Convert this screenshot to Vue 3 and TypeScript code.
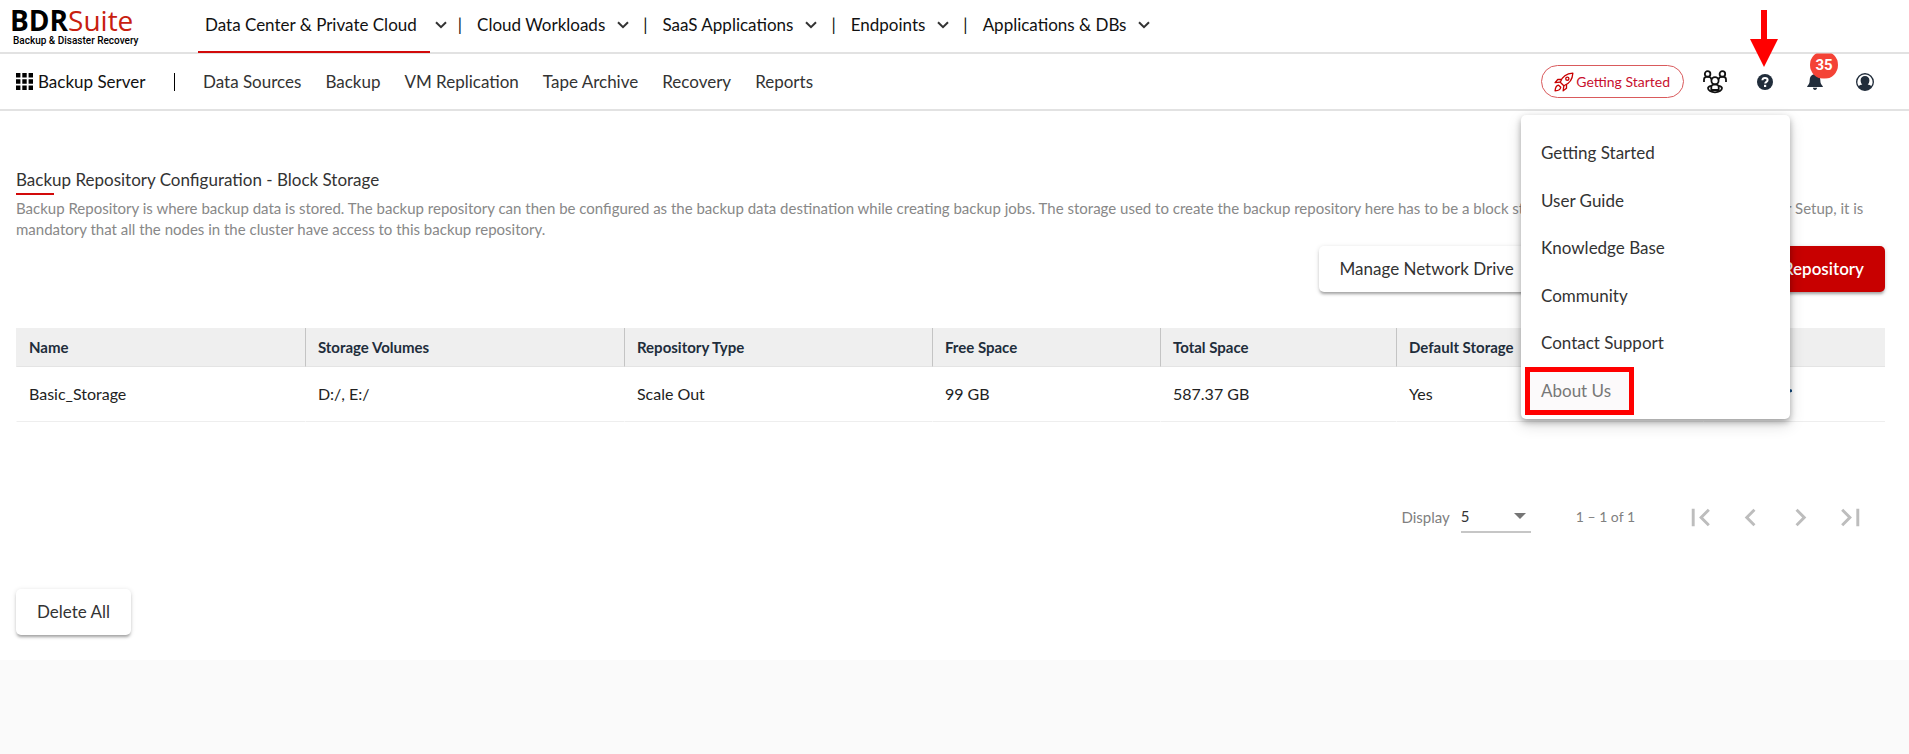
<script setup lang="ts">
import { ref } from 'vue'

interface Repository {
  name: string
  volumes: string
  type: string
  free: string
  total: string
  isDefault: boolean
}

const products = ['Data Center & Private Cloud', 'Cloud Workloads', 'SaaS Applications', 'Endpoints', 'Applications & DBs']
const sections = ['Data Sources', 'Backup', 'VM Replication', 'Tape Archive', 'Recovery', 'Reports']
const helpLinks = ['Getting Started', 'User Guide', 'Knowledge Base', 'Community', 'Contact Support', 'About Us']
const highlighted = 'About Us'

const repositories: Repository[] = [
  { name: 'Basic_Storage', volumes: 'D:/, E:/', type: 'Scale Out', free: '99 GB', total: '587.37 GB', isDefault: true },
]

const helpOpen = ref(true)
const pageSize = ref(5)
</script>

<template>
  <div class="page">
    <header class="topbar">
      <a class="brand" href="#">
        <span class="brand-name"><b>BDR</b><span class="brand-accent">Suite</span></span>
        <span class="brand-tag">Backup &amp; Disaster Recovery</span>
      </a>
      <nav class="products" aria-label="Products">
        <template v-for="(p, i) in products" :key="p">
          <span v-if="i > 0" class="bar" aria-hidden="true">|</span>
          <button type="button" class="product" :class="{ active: i === 0 }">
            {{ p }}
            <svg class="chevron" viewBox="0 0 12 8" aria-hidden="true"><path d="M1 1.2l5 5 5-5" /></svg>
          </button>
        </template>
      </nav>
    </header>

    <div class="subbar">
      <a class="server" href="#">
        <svg class="grid-icon" viewBox="0 0 17 17" aria-hidden="true">
          <path d="M0 0h4.4v4.4H0zM6.3 0h4.4v4.4H6.3zM12.6 0H17v4.4h-4.4zM0 6.3h4.4v4.4H0zM6.3 6.3h4.4v4.4H6.3zM12.6 6.3H17v4.4h-4.4zM0 12.6h4.4V17H0zM6.3 12.6h4.4V17H6.3zM12.6 12.6H17V17h-4.4z" />
        </svg>
        <span>Backup Server</span>
      </a>
      <nav class="sections" aria-label="Backup Server">
        <a v-for="s in sections" :key="s" href="#">{{ s }}</a>
      </nav>

      <div class="tools">
        <button type="button" class="pill">
          <svg class="rocket" viewBox="0 0 24 24" aria-hidden="true">
            <path d="M7.500 12.200C9.500 6.600 14.500 2 22.600 1.400c-.4 7.800-5 12.800-10.800 15.100z" />
            <path d="M9 9H4.500L1.300 12.800l6.200-.6M15 14.800v4.700L11 22.500l.8-6" />
            <circle cx="16" cy="8" r="1.900" />
            <path d="M5.500 15.800c-3 .4-3.900 3.200-4.200 6.900 3.600-.2 6.400-1.300 6.800-4.400z" />
          </svg>
          <span>Getting Started</span>
        </button>

        <button type="button" class="tool" aria-label="Community">
          <svg class="people" viewBox="0 0 24 24" aria-hidden="true">
            <circle cx="4.600" cy="4" r="2.800" />
            <circle cx="19.400" cy="4" r="2.800" />
            <path d="M1 12V9.500c0-1.700 1.200-2.800 3.600-2.800S8.200 8 8.600 9.600M23 12V9.500c0-1.700-1.200-2.800-3.600-2.800S15.800 8 15.400 9.600" />
            <circle cx="12" cy="10.800" r="3.600" />
            <path d="M8 15.800c-2 .5-3 1.300-3 2.300 0 2.300 3 4.300 7 4.300s7-2 7-4.300c0-1-1-1.800-3-2.300" />
            <path d="M8.300 20V17.200c0-1.700 1.500-2.800 3.700-2.800s3.700 1.100 3.700 2.800V20z" />
          </svg>
        </button>

        <div class="help">
          <button type="button" class="tool" aria-label="Help" :aria-expanded="helpOpen" @click="helpOpen = !helpOpen">
            <svg class="question" viewBox="0 0 16 16" aria-hidden="true">
              <circle cx="8" cy="8" r="8" />
              <path d="M5.400 6.300C5.500 4.600 6.500 3.900 8 3.900c1.600 0 2.600.9 2.600 2.100 0 1.900-2.300 1.700-2.400 3.500" />
              <rect x="7" y="10.800" width="2.200" height="2.200" />
            </svg>
          </button>
          <svg class="pointer" viewBox="0 0 28 57" aria-hidden="true"><path d="M11 0h6v29h11L14 57 0 29h11z" /></svg>
          <div v-if="helpOpen" class="menu">
            <a v-for="h in helpLinks" :key="h" href="#" :class="{ marked: h === highlighted }">{{ h }}</a>
          </div>
        </div>

        <button type="button" class="tool bell-button" aria-label="Notifications">
          <svg class="bell" viewBox="0 0 16 17" aria-hidden="true">
            <path d="M8 0c.7 0 1.100.5 1.100 1.200C11.800 1.700 13.300 4 13.300 7c0 3.600 1 4.500 2.500 6.200V14H.2v-.8C1.700 11.500 2.700 10.600 2.700 7c0-3 1.500-5.300 4.200-5.800C6.900.5 7.300 0 8 0zM5.900 14.800h4.200C10 16 9.200 17 8 17s-2-1-2.100-2.200z" />
          </svg>
          <span class="badge">35</span>
        </button>

        <button type="button" class="tool" aria-label="Account">
          <svg class="account" viewBox="0 0 18 18" aria-hidden="true">
            <path fill-rule="evenodd" d="M9 0a9 9 0 1 1 0 18A9 9 0 0 1 9 0zm0 1.500a7.500 7.500 0 0 0-6.300 11.600c1-1 2.200-1.400 3.600-1.600C5.200 10.600 4.600 9 4.600 7.200 4.600 4.600 6.400 2.900 9 2.900s4.400 1.700 4.400 4.300c0 1.800-.6 3.400-1.700 4.300 1.400.2 2.600.6 3.600 1.600A7.500 7.500 0 0 0 9 1.500z" />
          </svg>
        </button>
      </div>
    </div>

    <main class="content">
      <h1>Backup Repository Configuration - Block Storage</h1>
      <p class="intro">
        Backup Repository is where backup data is stored. The backup repository can then be configured as the backup data
        destination while creating backup jobs. The storage used to create the backup repository here has to be a block
        storage. In case of a Backup Server Cluster Setup, it is mandatory that all the nodes in the cluster have access
        to this backup repository.
      </p>

      <div class="actions">
        <button type="button" class="btn">Manage Network Drive</button>
        <button type="button" class="btn primary">Create Backup Repository</button>
      </div>

      <table>
        <colgroup>
          <col class="c1" /><col class="c2" /><col class="c3" /><col class="c4" /><col class="c5" /><col class="c6" /><col />
        </colgroup>
        <thead>
          <tr>
            <th>Name</th>
            <th>Storage Volumes</th>
            <th>Repository Type</th>
            <th>Free Space</th>
            <th>Total Space</th>
            <th>Default Storage</th>
            <th>Action</th>
          </tr>
        </thead>
        <tbody>
          <tr v-for="r in repositories" :key="r.name">
            <td>{{ r.name }}</td>
            <td>{{ r.volumes }}</td>
            <td>{{ r.type }}</td>
            <td>{{ r.free }}</td>
            <td>{{ r.total }}</td>
            <td>{{ r.isDefault ? 'Yes' : 'No' }}</td>
            <td>
              <div class="row-tools">
                <button type="button" aria-label="Delete">
                  <svg viewBox="0 0 20 20"><path d="M4 6h12l-1 13H5zM3 3h4l1-2h4l1 2h4v2H3z" /></svg>
                </button>
                <button type="button" aria-label="Edit">
                  <svg viewBox="0 0 20 20"><path d="M1 19v-4L14 2l4 4L5 19zM17 4l3 1v2l-2 1z" /></svg>
                </button>
              </div>
            </td>
          </tr>
        </tbody>
      </table>

      <div class="pager">
        <label for="page-size">Display</label>
        <span class="size">
          <select id="page-size" v-model="pageSize">
            <option :value="5">5</option>
            <option :value="10">10</option>
            <option :value="25">25</option>
          </select>
          <svg viewBox="0 0 12 6" aria-hidden="true"><path d="M0 0h12L6 6z" /></svg>
        </span>
        <span class="range">1 – 1 of 1</span>
        <button type="button" disabled aria-label="First page">
          <svg viewBox="0 0 24 24"><path d="M18.410 16.590L13.820 12l4.590-4.590L17 6l-6 6 6 6zM6 6h2v12H6z" /></svg>
        </button>
        <button type="button" disabled aria-label="Previous page">
          <svg viewBox="0 0 24 24"><path d="M15.410 7.410L14 6l-6 6 6 6 1.410-1.410L10.830 12z" /></svg>
        </button>
        <button type="button" disabled aria-label="Next page">
          <svg viewBox="0 0 24 24"><path d="M10 6L8.590 7.410 13.170 12l-4.580 4.590L10 18l6-6z" /></svg>
        </button>
        <button type="button" disabled aria-label="Last page">
          <svg viewBox="0 0 24 24"><path d="M5.590 7.410L10.180 12l-4.590 4.590L7 18l6-6-6-6zM16 6h2v12h-2z" /></svg>
        </button>
      </div>

      <button type="button" class="btn">Delete All</button>
    </main>
  </div>
</template>

<style>
body {
  background: #fafafa;
}
</style>

<style scoped>
.page {
  font-family: Lato, "Liberation Sans", sans-serif;
  font-size: 17px;
  line-height: 24px;
  color: #333;
}

.page *,
.page *::before,
.page *::after {
  box-sizing: border-box;
}

a {
  color: inherit;
  text-decoration: none;
}

button {
  margin: 0;
  padding: 0;
  border: 0;
  background: none;
  font: inherit;
  color: inherit;
  cursor: pointer;
}

.topbar {
  display: flex;
  height: 54px;
  border-bottom: 2px solid #e2e2e2;
  background: #fff;
}

.brand {
  width: 187px;
  padding: 5px 0 0 10px;
}

.brand-name {
  display: block;
  font: 500 28px/30px "Open Sans", sans-serif;
  color: #000;
}

.brand-name b {
  font-weight: 700;
}

.brand-accent {
  color: #c8200f;
}

.brand-tag {
  display: block;
  padding-left: 3px;
  font: 500 10px/12px Roboto, sans-serif;
  color: #000;
  white-space: nowrap;
}

.products {
  display: flex;
  align-items: flex-start;
  color: #111;
}

.product {
  display: flex;
  align-items: center;
  gap: 12px;
  height: 53px;
  padding: 0 3px 3px 15px;
  white-space: nowrap;
}

.product.active {
  position: relative;
  gap: 18px;
  margin-left: 11px;
  padding: 0 0 3px 7px;
}

.product.active::after {
  content: "";
  position: absolute;
  left: 0;
  bottom: 0;
  width: calc(100% - 17px);
  height: 2px;
  background: #d20a0a;
}

.bar {
  padding-left: 11px;
  line-height: 50px;
}

.chevron {
  width: 12px;
  height: 8px;
  fill: none;
  stroke: #333;
  stroke-width: 2;
}

.subbar {
  display: flex;
  align-items: center;
  height: 57px;
  padding: 0 19px 0 16px;
  border-bottom: 2px solid #e2e2e2;
  background: #fff;
}

.server {
  display: flex;
  align-items: center;
  gap: 5px;
  width: 159px;
  height: 18px;
  border-right: 1px solid #000;
  color: #111;
}

.grid-icon {
  width: 17px;
  height: 17px;
  fill: #000;
}

.sections {
  display: flex;
  gap: 24px;
  margin-left: 28px;
  white-space: nowrap;
}

.tools {
  display: flex;
  align-items: center;
  margin-left: auto;
}

.pill {
  display: flex;
  align-items: center;
  gap: 2px;
  height: 33px;
  margin-right: 6px;
  padding: 0 13px 0 12px;
  border: 1px solid #d95a5c;
  border-radius: 17px;
  font-size: 14px;
  color: #c8102e;
}

.rocket {
  width: 20px;
  height: 20px;
  fill: none;
  stroke: #c80000;
  stroke-width: 1.6;
  stroke-linejoin: round;
}

.tool {
  display: flex;
  align-items: center;
  justify-content: center;
  width: 50px;
  height: 48px;
}

.people {
  width: 24px;
  height: 24px;
  fill: none;
  stroke: #111;
  stroke-width: 1.8;
}

.question {
  width: 16px;
  height: 16px;
  fill: #212d3b;
}

.question path {
  fill: none;
  stroke: #fff;
  stroke-width: 2;
}

.question rect {
  fill: #fff;
}

.bell {
  width: 16px;
  height: 17px;
  fill: #212d3b;
}

.account {
  width: 18px;
  height: 18px;
  fill: #212d3b;
}

.help,
.bell-button {
  position: relative;
}

.badge {
  position: absolute;
  top: -7px;
  left: 20px;
  width: 28px;
  height: 28px;
  border-radius: 50%;
  background: #f44336;
  clip-path: inset(3px 0 0 0);
  font: bold 15px/28px Roboto, sans-serif;
  color: #fff;
  text-align: center;
}

.pointer {
  position: absolute;
  top: -48px;
  left: 10px;
  width: 28px;
  height: 57px;
  fill: #f00;
}

.menu {
  position: absolute;
  z-index: 2;
  top: 57px;
  right: 0;
  display: grid;
  grid-template-rows: repeat(6, 1fr);
  width: 269px;
  height: 304px;
  padding: 15px 0 4px;
  border-radius: 5px;
  background: #fff;
  box-shadow: 0 3px 6px rgba(0, 0, 0, 0.3), 0 6px 16px rgba(0, 0, 0, 0.14);
}

.menu a {
  display: flex;
  align-items: center;
  padding-left: 20px;
}

.menu .marked {
  justify-self: start;
  margin-left: 4px;
  padding: 0 18px 0 11px;
  border: 5px solid #f00;
  background: #fcfafb;
  color: #777;
}

.content {
  padding: 57px 24px 25px 16px;
  background: #fff;
}

h1 {
  margin: 0;
  font-size: 17px;
  font-weight: 400;
  line-height: 24px;
}

h1::after {
  content: "";
  display: block;
  width: 38px;
  height: 2px;
  margin: 1px 0 3px;
  background: #d20a0a;
}

.intro {
  margin: 0;
  font-size: 15px;
  line-height: 21px;
  color: #888;
}

.actions {
  display: flex;
  justify-content: flex-end;
  gap: 113px;
  margin: 6px 0 36px;
}

.btn {
  height: 46px;
  padding: 0 21px;
  border-radius: 5px;
  background: #fff;
  box-shadow: 0 3px 3px -1px rgba(0, 0, 0, 0.3), 0 1px 5px rgba(0, 0, 0, 0.14);
}

.primary {
  background: #c80000;
  color: #fff;
  font-weight: 600;
}

table {
  width: 100%;
  border-collapse: separate;
  border-spacing: 0;
  table-layout: fixed;
}

.c1 { width: 15.46%; }
.c2 { width: 17.07%; }
.c3 { width: 16.48%; }
.c4 { width: 12.2%; }
.c5 { width: 12.63%; }
.c6 { width: 16.43%; }

th,
td {
  padding: 0 12px;
  text-align: left;
  white-space: nowrap;
}

th {
  height: 39px;
  border-left: 1px solid #c4c4c4;
  border-bottom: 1px solid #e4e4e4;
  background: #efefef;
  font-size: 15px;
  color: #212d3b;
}

th:first-child {
  border-left-color: #efefef;
}

td {
  height: 55px;
  border-left: 1px solid #fff;
  border-bottom: 1px solid #eee;
  font-size: 16px;
  color: #222;
}

.row-tools {
  display: flex;
  gap: 38px;
}

.row-tools svg {
  display: block;
  width: 19px;
  height: 19px;
  fill: #12497f;
}

.pager {
  display: flex;
  align-items: center;
  justify-content: flex-end;
  height: 56px;
  margin: 67px 10px 44px 0;
  font-size: 15px;
  color: #808080;
}

.size {
  position: relative;
  width: 70px;
  margin: 0 45px 0 11px;
}

.size select {
  appearance: none;
  display: block;
  width: 100%;
  height: 32px;
  padding: 0;
  border: 0;
  border-bottom: 2px solid #c6c6c6;
  border-radius: 0;
  background: none;
  font: inherit;
  color: #333;
}

.size svg {
  position: absolute;
  top: 12px;
  right: 5px;
  width: 12px;
  height: 6px;
  fill: #757575;
  pointer-events: none;
}

.range {
  margin-right: 40px;
  font-size: 14px;
}

.pager button {
  display: flex;
  align-items: center;
  justify-content: center;
  width: 50px;
  height: 50px;
}

.pager button svg {
  width: 35px;
  height: 35px;
  fill: #bdbdbd;
}
</style>
